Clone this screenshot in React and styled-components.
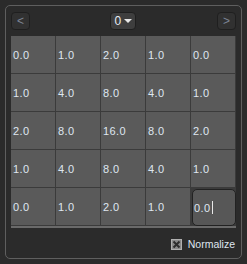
import React from 'react';
import styled, { createGlobalStyle } from 'styled-components';

const GlobalStyle = createGlobalStyle`
  body {
    margin: 0;
    background: #2b2b2b;
    font-family: Tahoma, "Liberation Sans", "DejaVu Sans", sans-serif;
  }
`;

const Panel = styled.div`
  box-sizing: border-box;
  margin: 5px 0 0 5px;
  width: 237px;
  height: 254px;
  border: 1px solid #5f5f5f;
  border-radius: 5px;
  padding: 6px 5px 0 5px;
  display: flex;
  flex-direction: column;
`;

const Toolbar = styled.div`
  display: flex;
  align-items: center;
  justify-content: space-between;
  height: 18px;
`;

const NavButton = styled.div`
  box-sizing: border-box;
  width: 19px;
  height: 18px;
  border: 1px solid #1f1f1f;
  border-radius: 4px;
  background: #313131;
  color: #7c8594;
  font-size: 12px;
  display: flex;
  align-items: center;
  justify-content: center;
  line-height: 1;
`;

const Dropdown = styled.div`
  box-sizing: border-box;
  width: 26px;
  height: 18px;
  margin-left: -2px;
  border: 1px solid #1f1f1f;
  border-radius: 4px;
  background: #3e3e3e;
  color: #e6ebf2;
  font-size: 12px;
  display: flex;
  align-items: center;
  gap: 3px;
  padding-left: 4px;
`;

const Caret = styled.span`
  width: 0;
  height: 0;
  border-left: 4px solid transparent;
  border-right: 4px solid transparent;
  border-top: 4px solid #e8e8e8;
`;

const Grid = styled.div`
  margin-top: 6px;
  display: grid;
  grid-template-columns: repeat(5, 45px);
  grid-auto-rows: 38px;
  background: #3b3b3b;
  border-bottom: 2px solid #6a6a6a;
`;

const Cell = styled.div`
  box-sizing: border-box;
  background: #5a5a5a;
  border-right: 1px solid #3b3b3b;
  border-bottom: 1px solid #3b3b3b;
  color: #dfe6f0;
  font-size: 11px;
  letter-spacing: 0.4px;
  display: flex;
  align-items: center;
  padding-left: 2px;
  ${p => p.editing && `
    border: 1px solid #222;
    border-radius: 5px;
    background: #575757;
    margin: 1px 0 0 1px;
    padding-left: 1px;
  `}
`;

const Cursor = styled.span`
  display: inline-block;
  width: 1px;
  height: 13px;
  background: #e8e8e8;
  margin-left: 1px;
`;

const Footer = styled.div`
  display: flex;
  justify-content: flex-end;
  align-items: center;
  gap: 6px;
  margin-top: 10px;
  padding-right: 1px;
  color: #dfe6f0;
  font-size: 10.5px;
`;

const rows = [
  ['0.0', '1.0', '2.0', '1.0', '0.0'],
  ['1.0', '4.0', '8.0', '4.0', '1.0'],
  ['2.0', '8.0', '16.0', '8.0', '2.0'],
  ['1.0', '4.0', '8.0', '4.0', '1.0'],
  ['0.0', '1.0', '2.0', '1.0', '0.0'],
];

const CheckIcon = () => (
  <svg width="11" height="11" viewBox="0 0 11 11">
    <rect x="0.5" y="0.5" width="10" height="10" fill="#8a8a8a" stroke="#b0b0b0" />
    <path d="M2.5 2.5 L8.5 8.5 M8.5 2.5 L2.5 8.5" stroke="#2e2e2e" strokeWidth="2" />
  </svg>
);

export default function App() {
  return (
    <>
      <GlobalStyle />
      <Panel>
        <Toolbar>
          <NavButton>&lt;</NavButton>
          <Dropdown>
            0<Caret />
          </Dropdown>
          <NavButton>&gt;</NavButton>
        </Toolbar>
        <Grid>
          {rows.map((row, r) =>
            row.map((v, c) => {
              const editing = r === 4 && c === 4;
              return (
                <Cell key={`${r}-${c}`} editing={editing}>
                  {v}
                  {editing && <Cursor />}
                </Cell>
              );
            })
          )}
        </Grid>
        <Footer>
          <CheckIcon />
          Normalize
        </Footer>
      </Panel>
    </>
  );
}
